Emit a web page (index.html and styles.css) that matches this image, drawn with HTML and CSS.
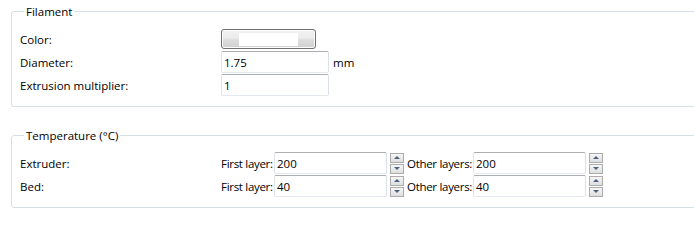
FILE: index.html
```html
<!DOCTYPE HTML>
<html>
  <head>
  <meta charset="UTF-8">
  <title>Filament settings</title>
  <link rel="stylesheet" href="styles.css">
  </head>

  <body>
    <div class="panel">
      <fieldset>
        <legend>Filament</legend>
        <div class="row">
          <span class="lbl">Color:</span>
          <span class="colorbtn"><span class="swatch"></span></span>
        </div>
        <div class="row">
          <span class="lbl">Diameter:</span>
          <input class="txt short" type="text" value="1.75">
          <span class="unit">mm</span>
        </div>
        <div class="row">
          <span class="lbl">Extrusion multiplier:</span>
          <input class="txt short" type="text" value="1">
        </div>
      </fieldset>

      <fieldset class="temp">
        <legend>Temperature (°C)</legend>
        <div class="row">
          <span class="lbl">Extruder:</span>
          <span class="fl">First layer:</span>
          <input class="txt long" type="text" value="200">
          <span class="spin"><span class="up"></span><span class="down"></span></span>
          <span class="ol">Other layers:</span>
          <input class="txt long" type="text" value="200">
          <span class="spin"><span class="up"></span><span class="down"></span></span>
        </div>
        <div class="row">
          <span class="lbl">Bed:</span>
          <span class="fl">First layer:</span>
          <input class="txt long" type="text" value="40">
          <span class="spin"><span class="up"></span><span class="down"></span></span>
          <span class="ol">Other layers:</span>
          <input class="txt long" type="text" value="40">
          <span class="spin"><span class="up"></span><span class="down"></span></span>
        </div>
      </fieldset>
    </div>
  </body>
</html>
```

FILE: styles.css
```css
body { margin: 0; font-family: "Open Sans", "Noto Sans", sans-serif; font-size: 11.5px; color: #000; background: #fff; overflow: hidden; }
.panel { width: 760px; padding: 4px 0 0 11px; }
fieldset {
  border: 1px solid #d5dfe5;
  border-radius: 3px;
  margin: 0;
  padding: 9px 0 9px 8px;
}
fieldset.temp { margin-top: 21px; }
legend { padding: 0 2px; margin-left: 4px; line-height: 15px; white-space: nowrap; }

.row { display: flex; align-items: center; height: 22px; margin-bottom: 1px; white-space: nowrap; }
.lbl { width: 201px; flex: none; }
.fl { width: 53px; flex: none; letter-spacing: -0.3px; }
.ol { width: 66px; flex: none; letter-spacing: -0.3px; }
.unit { margin-left: 4px; }

.txt {
  box-sizing: border-box;
  height: 22px;
  margin: 0;
  padding: 0 2px;
  font: inherit;
  color: #000;
  border: 1px solid;
  border-color: #abadb3 #dbdfe6 #e3e9ef #e2e3ea;
  border-radius: 2px;
  outline: none;
}
.txt.short { width: 108px; }
.txt.long { width: 113px; }

.colorbtn {
  box-sizing: border-box;
  width: 95px;
  height: 20px;
  border: 1px solid #707070;
  border-radius: 3px;
  background: linear-gradient(#f2f2f2 0%, #ebebeb 45%, #dddddd 55%, #cfcfcf 100%);
  box-shadow: inset 0 0 0 1px #fcfcfc;
  display: flex;
  align-items: center;
  justify-content: center;
}
.swatch { width: 59px; height: 13px; background: #fff; }

.spin { display: flex; flex-direction: column; gap: 1px; margin: 0 3px; flex: none; }
.spin span {
  box-sizing: border-box;
  width: 14px;
  height: 10px;
  border: 1px solid #acacac;
  background: linear-gradient(#f6f6f6, #dedede);
  display: flex;
  align-items: center;
  justify-content: center;
}
.spin span::after { content: ""; border-left: 3px solid transparent; border-right: 3px solid transparent; }
.spin .up::after { border-bottom: 3px solid #4c607f; }
.spin .down::after { border-top: 3px solid #4c607f; }
```
